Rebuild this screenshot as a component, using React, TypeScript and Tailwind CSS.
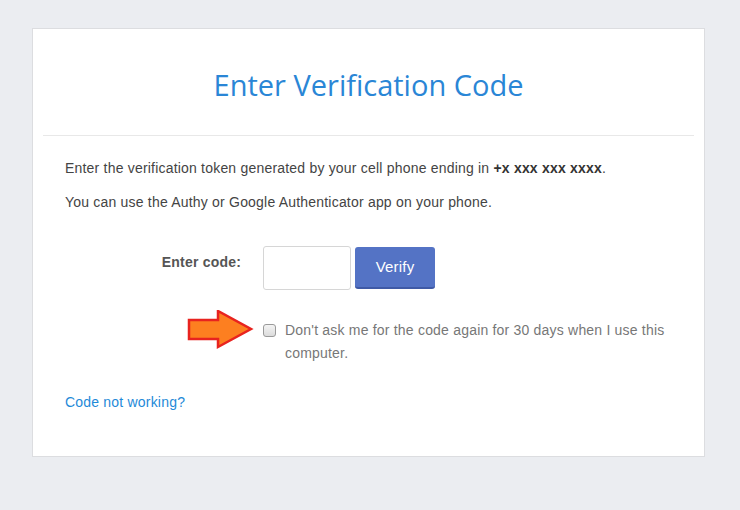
import React from "react";

export default function App() {
  return (
    <div className="w-[740px] h-[510px] bg-[#ebedf1] pt-[28px] pl-[32px]" style={{ fontFamily: '"Liberation Sans", Arial, sans-serif' }}>
      <div className="w-[673px] h-[429px] bg-white border border-[#dcdde0]">
        <div className="h-[106px] flex items-center justify-center pt-[6px]">
          <h1 className="text-[29px] text-[#2a86d6] font-normal tracking-[0px]" style={{ fontFamily: '"Open Sans", sans-serif' }}>
            Enter Verification Code
          </h1>
        </div>
        <div className="mx-[10px] h-px bg-[#e8e8e8]" />
        <div className="px-[32px] pt-[22px] text-[14px] tracking-[0.2px] text-[#444]">
          <p className="leading-[20px]">
            Enter the verification token generated by your cell phone ending in <b className="text-[#333]">+x xxx xxx xxxx</b>.
          </p>
          <p className="leading-[20px] mt-[13px] pt-[1px]">You can use the Authy or Google Authenticator app on your phone.</p>
          <div className="flex items-start mt-[34px]">
            <label className="w-[176px] text-right font-bold text-[#555] pt-[6px] leading-[20px]">Enter code:</label>
            <input className="ml-[22px] w-[88px] h-[44px] border border-[#d6d6d6] rounded-[3px] outline-none" />
            <button className="ml-[4px] mt-[1px] w-[80px] h-[42px] rounded-[3px] bg-[#5473c5] border-b-2 border-[#3f5aa6] text-white text-[15px]">
              Verify
            </button>
          </div>
          <div className="flex items-start mt-[29px] ml-[198px] relative">
            <svg className="absolute left-[-76px] top-[-9px]" width="68" height="40" viewBox="0 0 68 40">
              <polygon points="2,10 31,10 31,1 64,19 31,37 31,29 2,29" fill="#fd7f20" stroke="#e8231f" strokeWidth="2.5" strokeLinejoin="miter" />
            </svg>
            <span className="mt-[5px] w-[13px] h-[13px] rounded-[3px] border border-[#9a9a9a] bg-gradient-to-b from-[#f4f4f4] to-[#dcdcdc] shrink-0" />
            <span className="ml-[9px] w-[400px] leading-[23px] text-[#777]">
              Don't ask me for the code again for 30 days when I use this computer.
            </span>
          </div>
          <div className="mt-[27px]">
            <a className="text-[#1f8ad8] leading-[20px]">Code not working?</a>
          </div>
        </div>
      </div>
    </div>
  );
}
